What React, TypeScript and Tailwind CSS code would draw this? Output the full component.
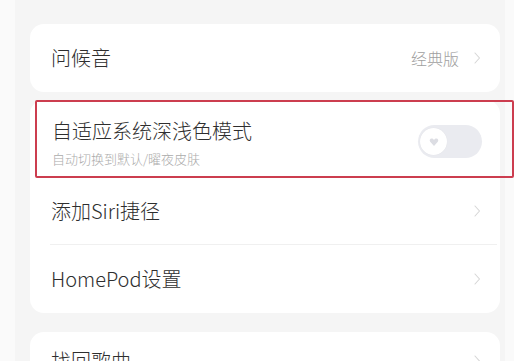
import React from "react";

const font = { fontFamily: '"Noto Sans CJK SC", "Noto Sans", sans-serif' };

function Chevron() {
  return (
    <svg width="8" height="12" viewBox="0 0 8 12" className="shrink-0">
      <path d="M2 1 L6.5 6 L2 11" fill="none" stroke="#d6d6d6" strokeWidth="1.1" strokeLinecap="round" strokeLinejoin="round" />
    </svg>
  );
}

function Row({ label, value, divider }: { label: string; value?: string; divider?: boolean }) {
  return (
    <div className="relative flex h-[68px] items-center justify-between pl-[21px] pr-[19px]">
      <span className="text-[20px] font-light leading-none text-[#2e2e2e]">{label}</span>
      <div className="flex items-center gap-[14px]">
        {value && <span className="text-[16px] font-light leading-none text-[#a0a0a0]">{value}</span>}
        <Chevron />
      </div>
      {divider && <div className="absolute bottom-0 left-[20px] right-[3px] h-px bg-[#f0f0f0]" />}
    </div>
  );
}

export default function App() {
  return (
    <div className="relative h-[361px] w-[514px] overflow-hidden bg-[#fafafa]" style={font}>
      <div className="ml-[15px] mr-[9px] flex h-full flex-col gap-[8px] bg-[#f5f5f5] pl-[15px] pr-[5px] pt-[24px]">
        <div className="rounded-[14px] bg-white">
          <Row label="问候音" value="经典版" />
        </div>
        <div className="rounded-[14px] bg-white">
          <div className="flex h-[77px] items-center justify-between pl-[22px] pr-[18px]">
            <div className="flex flex-col gap-[11px] pt-[8px]">
              <span className="text-[20px] font-light leading-none text-[#2e2e2e]">自适应系统深浅色模式</span>
              <span className="text-[13px] font-light leading-none text-[#ababab]">自动切换到默认/曜夜皮肤</span>
            </div>
            <div className="mt-[6px] flex h-[33px] w-[64px] items-center rounded-full bg-[#eaebf0] pl-[2px]">
              <div className="flex h-[27px] w-[27px] items-center justify-center rounded-full bg-white shadow-[0_0_1px_rgba(0,0,0,0.08)]">
                <svg width="10" height="10" viewBox="0 0 10 10">
                  <path d="M5 9 L1.2 4.8 C0.2 3.6 0.8 1.4 2.7 1.4 C3.8 1.4 4.5 2.1 5 2.8 C5.5 2.1 6.2 1.4 7.3 1.4 C9.2 1.4 9.8 3.6 8.8 4.8 Z" fill="#dcdde3" />
                </svg>
              </div>
            </div>
          </div>
          <Row label="添加Siri捷径" divider />
          <Row label="HomePod设置" />
        </div>
        <div className="mt-[11px] rounded-[14px] bg-white">
          <div className="flex h-[60px] items-start justify-between pl-[21px] pr-[19px] pt-[19px]">
            <span className="text-[20px] font-light leading-none text-[#2e2e2e]">找回歌曲</span>
            <div className="pt-[4px]"><Chevron /></div>
          </div>
        </div>
      </div>
      <div className="absolute left-[35px] top-[100px] h-[78px] w-[479px] rounded-[2px] border-2 border-[#cc3d4f]" />
    </div>
  );
}
